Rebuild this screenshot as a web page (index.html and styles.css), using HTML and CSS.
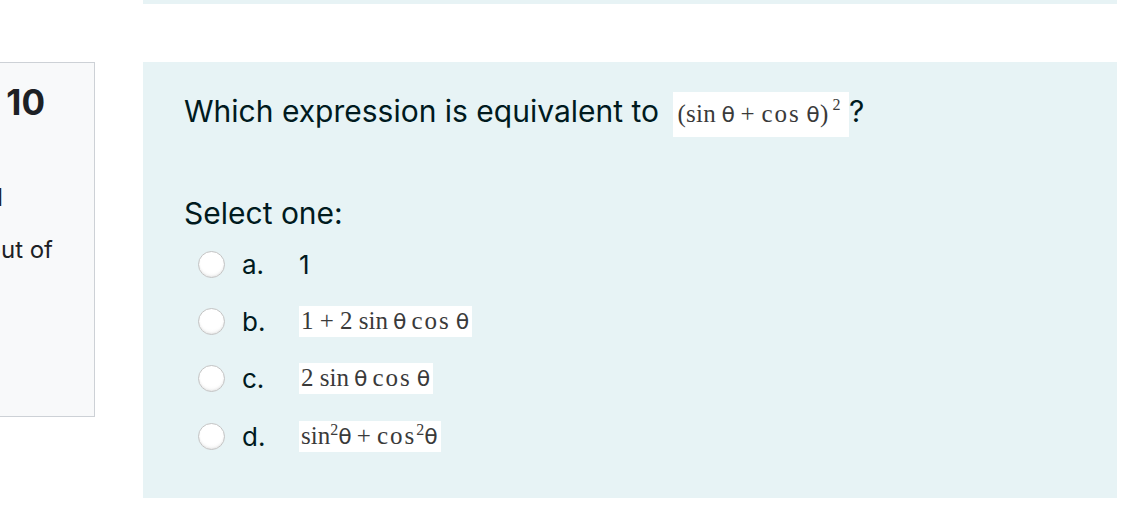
FILE: index.html
```html
<!DOCTYPE html>
<html>
<head>
<meta charset="utf-8">
<link rel="stylesheet" href="styles.css">
</head>
<body>
<div class="page">
  <div class="prev-que"></div>
  <div class="que">
    <div class="info">
      <h3 class="no">Question <span class="qno">10</span></h3>
      <div class="state">Answer saved</div>
      <div class="grade">Marked out of</div>
    </div>
    <div class="formulation">
      <p class="qtext">Which expression is equivalent to <span class="math math-q">(sin&thinsp;<span class="th">θ</span>&thinsp;+ <span class="cos">cos</span>&thinsp;<span class="th">θ</span>)<sup>2</sup></span>?</p>
      <div class="prompt">Select one:</div>
      <div class="answers">
        <label class="opt"><span class="radio"></span><span class="letter">a.</span><span class="plain">1</span></label>
        <label class="opt"><span class="radio"></span><span class="letter">b.</span><span class="math">1 + 2 sin&thinsp;<span class="th">θ</span>&thinsp;<span class="cos">cos</span>&thinsp;<span class="th">θ</span></span></label>
        <label class="opt"><span class="radio"></span><span class="letter">c.</span><span class="math">2 sin&thinsp;<span class="th">θ</span>&thinsp;<span class="cos">cos</span>&thinsp;<span class="th">θ</span></span></label>
        <label class="opt"><span class="radio"></span><span class="letter">d.</span><span class="math">sin<sup>2</sup><span class="th">θ</span>&thinsp;+ <span class="cos">cos</span><sup>2</sup><span class="th">θ</span></span></label>
      </div>
    </div>
  </div>
</div>
</body>
</html>
```
FILE: styles.css
```css
html, body {
  margin: 0;
  padding: 0;
  background: #ffffff;
}
body {
  font-family: Inter, Roboto, "Liberation Sans", sans-serif;
  color: #001a1e;
  overflow: hidden;
}
.page {
  width: 1134px;
  height: 524px;
}
.prev-que {
  margin-left: 143px;
  width: 974px;
  height: 4px;
  background: #e7f3f5;
}
.que {
  margin-top: 58px;
  display: flex;
  align-items: flex-start;
  gap: 48px;
}
.info {
  box-sizing: border-box;
  width: 345px;
  height: 355px;
  margin-left: -250px;
  background: #f8f9fa;
  border: 1px solid #cdd1d6;
  padding: 19px 0 0 0;
  color: #1d2125;
  text-align: right;
}
.no {
  margin: 0;
  padding-right: 49px;
  font-size: 35px;
  font-weight: 400;
  line-height: 40px;
  white-space: nowrap;
}
.qno {
  font-weight: 700;
}
.state {
  margin-top: 62px;
  padding-right: 91px;
  font-size: 24px;
  line-height: 28px;
  white-space: nowrap;
}
.grade {
  margin-top: 24px;
  padding-right: 41px;
  font-size: 24px;
  line-height: 28px;
  white-space: nowrap;
}
.formulation {
  box-sizing: border-box;
  width: 974px;
  height: 436px;
  background: #e7f3f5;
  padding: 27px 40px 0 41px;
}
.qtext {
  margin: 0;
  font-size: 30px;
  line-height: 44px;
}
.prompt {
  margin-top: 56px;
  font-size: 30px;
  line-height: 40px;
}
.answers {
  margin-top: 11px;
  display: flex;
  flex-direction: column;
  gap: 17.4px;
  padding-left: 14px;
}
.opt {
  display: flex;
  align-items: center;
  height: 40px;
  font-size: 26px;
}
.radio {
  box-sizing: border-box;
  width: 27px;
  height: 27px;
  border-radius: 50%;
  background: radial-gradient(circle at 50% 35%, #ffffff 55%, #f3f3f3 100%);
  border: 1px solid #c4c4c4;
  box-shadow: inset 0 -1px 2px rgba(0,0,0,0.08);
  flex: none;
}
.letter {
  margin-left: 17px;
  width: 57px;
}
.plain {
  font-size: 26px;
}
.math {
  display: inline-block;
  background: #ffffff;
  font-family: "Liberation Serif", "DejaVu Serif", serif;
  font-size: 25px;
  color: #3a3a3a;
  padding: 0 3px 0 2px;
  line-height: 30px;
  white-space: nowrap;
}
.math sup {
  font-size: 16px;
  vertical-align: 9px;
  line-height: 0;
}
.math .th {
  font-family: "DejaVu Sans", sans-serif;
  font-size: 22px;
}
.math .cos {
  letter-spacing: 2px;
}
.math-q {
  margin-left: 6px;
  line-height: 44px;
  padding: 0 8px 0 4px;
  vertical-align: baseline;
  letter-spacing: 0.3px;
}
.math-q sup {
  margin-left: 4px;
  vertical-align: 12px;
}
```
